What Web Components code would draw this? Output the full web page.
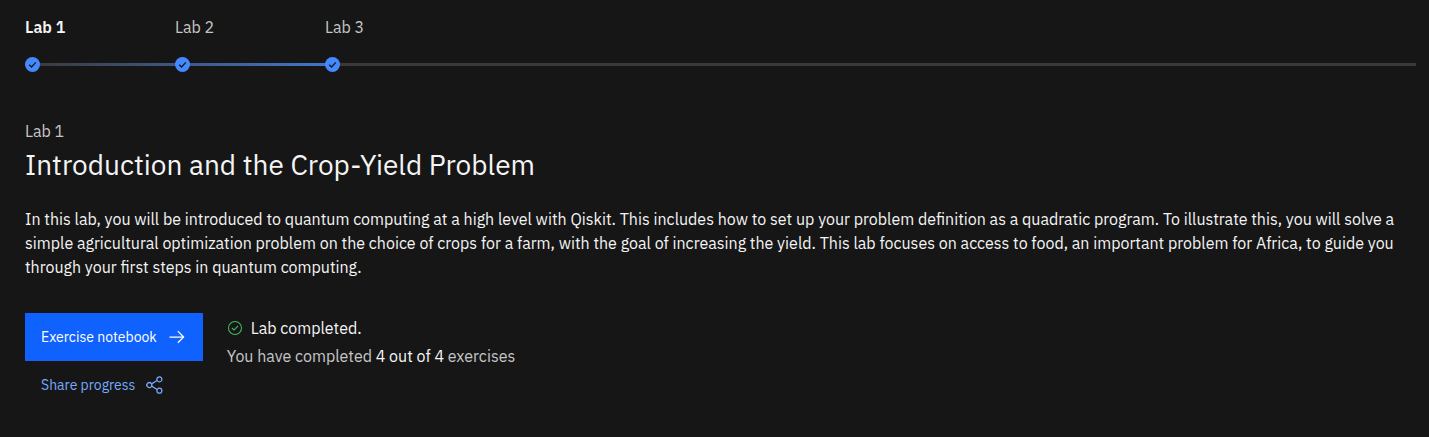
<!DOCTYPE html>
<html lang="en">
<head>
<meta charset="utf-8">
<meta name="viewport" content="width=device-width, initial-scale=1">
<title>Introduction and the Crop-Yield Problem</title>
<style>
body {
  margin: 0;
  background: #161616;
  color: #f4f4f4;
  font: 16px/24px "IBM Plex Sans", "Noto Sans", sans-serif;
}
</style>
</head>
<body>
<lab-page>
  <lab-progress slot="progress">
    <lab-step href="#lab-1" active>Lab 1</lab-step>
    <lab-step href="#lab-2">Lab 2</lab-step>
    <lab-step href="#lab-3">Lab 3</lab-step>
  </lab-progress>
  <lab-summary>
    <span slot="eyebrow">Lab 1</span>
    <span slot="title">Introduction and the Crop-Yield Problem</span>
    In this lab, you will be introduced to quantum computing at a high level with Qiskit. This includes how to set up your problem definition as a quadratic program. To illustrate this, you will solve a simple agricultural optimization problem on the choice of crops for a farm, with the goal of increasing the yield. This lab focuses on access to food, an important problem for Africa, to guide you through your first steps in quantum computing.
  </lab-summary>
  <lab-actions slot="actions"></lab-actions>
  <lab-status slot="status" done="4" total="4"></lab-status>
</lab-page>

<script>
function define(name, html) {
  const template = document.createElement('template');
  template.innerHTML = html;
  customElements.define(name, class extends HTMLElement {
    constructor() {
      super();
      this.attachShadow({ mode: 'open' }).append(template.content.cloneNode(true));
    }
    connectedCallback() {
      for (const node of this.shadowRoot.querySelectorAll('[data-text]')) {
        node.textContent = this.getAttribute(node.dataset.text);
      }
      const link = this.shadowRoot.querySelector('a');
      if (link && this.hasAttribute('href')) link.href = this.getAttribute('href');
      if (link && this.hasAttribute('active')) link.setAttribute('aria-current', 'step');
    }
  });
}

define('lab-page', `
  <style>
    :host { display: block; padding: 15px 13px 40px 25px; }
    main { padding-top: 47px; }
    .row { display: flex; gap: 24px; margin-top: 34px; }
  </style>
  <slot name="progress"></slot>
  <main>
    <slot></slot>
    <div class="row"><slot name="actions"></slot><slot name="status"></slot></div>
  </main>`);

/* The rail runs behind the step markers; its filled part ends at the last one. */
define('lab-progress', `
  <style>
    :host { display: block; }
    nav {
      display: flex;
      background:
        linear-gradient(90deg, #393939, #4376cf) 0 48px / 308px 3px no-repeat,
        linear-gradient(#393939, #393939) 0 48px / 100% 3px no-repeat;
    }
  </style>
  <nav aria-label="Labs"><slot></slot></nav>`);

define('lab-step', `
  <style>
    :host { display: block; flex: 0 0 150px; }
    a { display: flex; flex-direction: column; gap: 18px; color: #c6c6c6; text-decoration: none; }
    :host([active]) a { color: #f4f4f4; font-weight: 600; }
    svg { display: block; width: 15px; height: 15px; }
  </style>
  <a href="#">
    <slot></slot>
    <svg viewBox="0 0 15 15" aria-hidden="true">
      <circle cx="7.5" cy="7.5" r="7.5" fill="#4589ff"/>
      <path d="M4.2 7.7 6.6 10 10.8 5.4" fill="none" stroke="#161616" stroke-width="1.3"/>
    </svg>
  </a>`);

define('lab-summary', `
  <style>
    :host { display: block; }
    .eyebrow { color: #c6c6c6; }
    h1 { margin: 4px 0 0; font-size: 28px; line-height: 36px; font-weight: 400; }
    .text { margin: 24px 0 0; }
  </style>
  <div class="eyebrow"><slot name="eyebrow"></slot></div>
  <h1><slot name="title"></slot></h1>
  <p class="text"><slot></slot></p>`);

define('lab-actions', `
  <style>
    :host { display: flex; flex-direction: column; align-items: flex-start; }
    button {
      display: flex; align-items: center; gap: 10px;
      height: 48px; margin: 0; padding: 0 16px; border: 0;
      background: none; color: #78a9ff; font: inherit; font-size: 14px; line-height: 18px;
    }
    .primary { background: #0f62fe; color: #fff; }
    svg { display: block; width: 20px; height: 20px; fill: currentColor; }
  </style>
  <button type="button" class="primary">Exercise notebook
    <svg viewBox="0 0 32 32" aria-hidden="true"><path d="M18 6 16.57 7.393 24.15 15 4 15 4 17 24.15 17 16.57 24.573 18 26 28 16 18 6z"/></svg>
  </button>
  <button type="button">Share progress
    <svg viewBox="0 0 32 32" aria-hidden="true"><path d="M23 20a5 5 0 0 0-3.89 1.89L11.8 17.32a4.46 4.46 0 0 0 0-2.64l7.31-4.57A5 5 0 1 0 18 7a4.79 4.79 0 0 0 .2 1.32l-7.31 4.57a5 5 0 1 0 0 6.22l7.31 4.57A4.79 4.79 0 0 0 18 25a5 5 0 1 0 5-5ZM23 4a3 3 0 1 1-3 3 3 3 0 0 1 3-3ZM7 19a3 3 0 1 1 3-3 3 3 0 0 1-3 3Zm16 9a3 3 0 1 1 3-3 3 3 0 0 1-3 3Z"/></svg>
  </button>`);

define('lab-status', `
  <style>
    :host { display: flex; flex-direction: column; gap: 4px; padding-top: 3px; }
    div { display: flex; align-items: center; gap: 8px; }
    svg { display: block; width: 16px; height: 16px; fill: #42be65; }
    p { margin: 0; color: #c6c6c6; }
    span { color: #f4f4f4; }
  </style>
  <div role="status">
    <svg viewBox="0 0 32 32" aria-hidden="true"><path d="M14 21.414 9 16.413 10.413 15 14 18.586 21.585 11 23 12.415 14 21.414z"/><path d="M16 2A14 14 0 1 0 30 16 14 14 0 0 0 16 2Zm0 26A12 12 0 1 1 28 16 12 12 0 0 1 16 28Z"/></svg>
    Lab completed.
  </div>
  <p>You have completed <span><span data-text="done"></span> out of <span data-text="total"></span></span> exercises</p>`);
</script>
</body>
</html>
